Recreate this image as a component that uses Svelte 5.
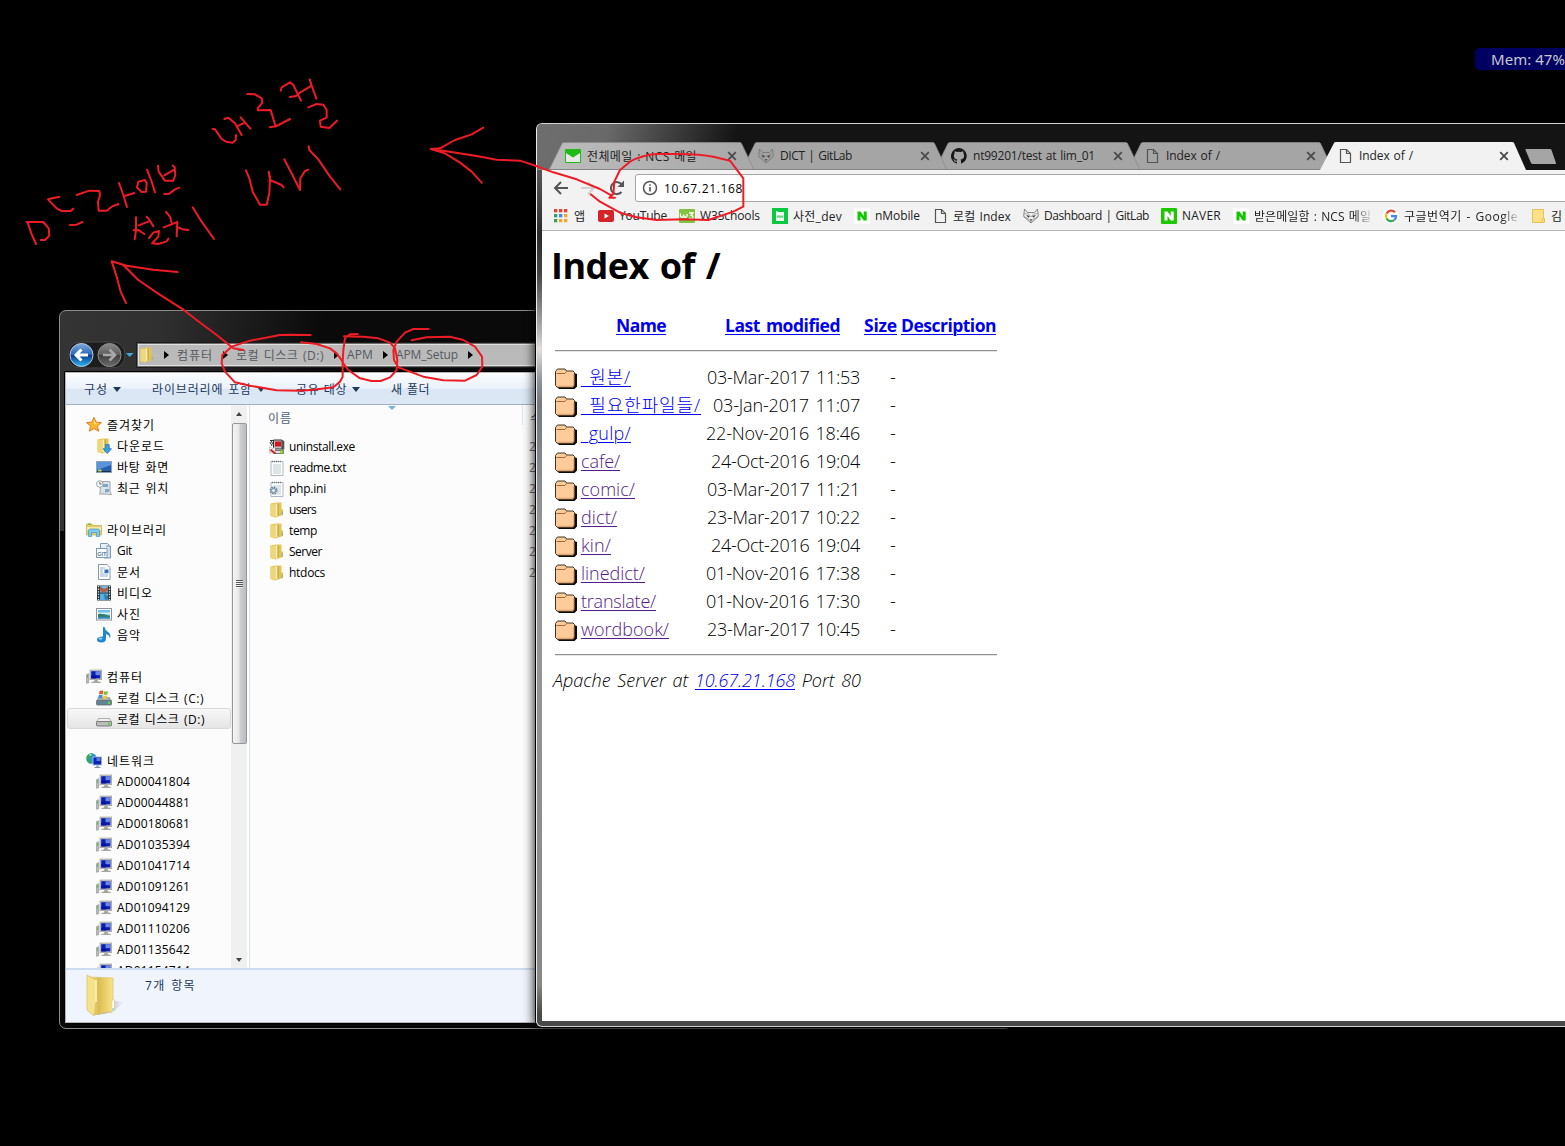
<script>
  // Spreads the letters of a label so that it takes exactly the given width.
  function fit(node, width) {
    const range = document.createRange();
    range.selectNodeContents(node);
    const natural = range.getBoundingClientRect().width;
    const count = [...node.textContent].length;
    node.style.letterSpacing = `${(width - natural) / count}px`;
    node.style.width = `${width}px`;
  }

  const isKorean = (s) => /[가-힣]/.test(s);

  const crumbs = [['컴퓨터', 36], ['로컬 디스크 (D:)', 88], ['APM', 26], ['APM_Setup', 62]];
  const commands = [['구성', 24, true], ['라이브러리에 포함', 100, true], ['공유 대상', 51, true], ['새 폴더', 39, false]];
  const pcs = ['AD00041804', 'AD00044881', 'AD00180681', 'AD01035394', 'AD01041714', 'AD01091261', 'AD01094129', 'AD01110206', 'AD01135642', 'AD01154714'];
  const groups = [
    { icon: 'star', name: '즐겨찾기', w: 48, items: [['download', '다운로드', 48], ['desktop', '바탕 화면', 52], ['recent', '최근 위치', 52]] },
    { icon: 'library', name: '라이브러리', w: 60, items: [['git', 'Git', 15], ['doc', '문서', 24], ['video', '비디오', 36], ['photo', '사진', 24], ['music', '음악', 24]] },
    { icon: 'pc', name: '컴퓨터', w: 36, items: [['diskc', '로컬 디스크 (C:)', 87], ['diskd', '로컬 디스크 (D:)', 88]] },
    { icon: 'network', name: '네트워크', w: 48, items: pcs.map((p) => ['pc', p, 73]) }
  ];
  const files = [['setup', 'uninstall.exe', 66], ['text', 'readme.txt', 57], ['ini', 'php.ini', 37], ['folder', 'users', 27], ['folder', 'temp', 28], ['folder', 'Server', 33], ['folder', 'htdocs', 36]];
  const tabs = [['mail', '전체메일 : NCS 메일', 110], ['gitlab', 'DICT | GitLab', 72], ['github', 'nt99201/test at lim_01', 122], ['page', 'Index of /', 54], ['page', 'Index of /', 54]];
  const bookmarks = [['youtube', 'YouTube', 48], ['w3', 'W3Schools', 60], ['dict', '사전_dev', 49], ['nwhite', 'nMobile', 45], ['page', '로컬 Index', 58], ['gitlab', 'Dashboard | GitLab', 105], ['ngreen', 'NAVER', 39], ['nwhite', '받은메일함 : NCS 메일', 117, true], ['google', '구글번역기 - Google', 114, true], ['bfolder', '김', 12]];
  const rows = [
    ['_원본/', 50, '03-Mar-2017 11:53', 153, false], ['_필요한파일들/', 120, '03-Jan-2017 11:07', 147, false],
    ['_gulp/', 50, '22-Nov-2016 18:46', 154, false], ['cafe/', 39, '24-Oct-2016 19:04', 149, true],
    ['comic/', 54, '03-Mar-2017 11:21', 153, true], ['dict/', 36, '23-Mar-2017 10:22', 153, true],
    ['kin/', 30, '24-Oct-2016 19:04', 149, true], ['linedict/', 64, '01-Nov-2016 17:38', 154, true],
    ['translate/', 75, '01-Nov-2016 17:30', 154, true], ['wordbook/', 88, '23-Mar-2017 10:45', 153, true]
  ];
</script>

{#snippet icon(name)}
  <svg class="ico" viewBox="0 0 16 16" width="16" height="16">
    {#if name === 'star'}
      <path d="M8 .3l2.200 4.800 5.200.5-3.900 3.500 1.200 5.200L8 11.600l-4.700 2.700 1.200-5.200L.6 5.600l5.200-.5z" fill="#fdb52b" stroke="#e0812c" />
      <path d="M8 2.500l1.400 3.500 3 .4L8 7.500z" fill="#ffe58a" />
    {:else if name === 'folder' || name === 'download'}
      <path d="M1.500 1.500L7 .5h5.500v13L6 15.500 1.500 14z" fill="#e2c557" />
      <path d="M1.500 1.500L6 2.500v13L1.500 14z" fill="#eed67a" />
      <path d="M6.500 1.500h2v12l-2 1z" fill="#fbf0b8" />
      <path d="M8.500 1.500h1.200v12H8.500z" fill="#c9a43a" />
      <path d="M12 7.500h2V13l-2 .5z" fill="#dcbf58" />
      {#if name === 'download'}
        <path d="M9.500 6.500h3.600v4.200h2.500L11.300 15.600 7 10.700h2.500z" fill="#35a3ea" stroke="#1d74bd" stroke-width=".7" />
      {:else}
        <path d="M12.800 10h.9v2.500h-.9z" fill="#5fb0dc" />
      {/if}
    {:else if name === 'desktop'}
      <rect x=".5" y="2.500" width="15" height="11" fill="#245fae" stroke="#8fa2bd" />
      <path d="M1 3h14v3L1 11z" fill="#5694dc" />
      <path d="M1 12h14v1H1z" fill="#1b2c4d" />
      <rect x="2" y="10.500" width="2" height="2" fill="#8ce05a" />
      <rect x="4" y="10.500" width="1.500" height="2" fill="#f7c948" />
    {:else if name === 'recent'}
      <path d="M5 1.500h9v10l1.500 3H5.500L4 12z" fill="#dfe3e6" stroke="#8d969d" stroke-width=".8" />
      <path d="M7 4h5v3H7zM9 9h4v3H9z" fill="#75aacb" />
      <circle cx="3.800" cy="4" r="3.300" fill="#f3f5f6" stroke="#8d969d" stroke-width=".8" />
      <path d="M3.800 2v2h1.700" fill="none" stroke="#555" stroke-width=".8" />
      <path d="M3 12.500h9v2.500H3z" fill="#c3c9cd" />
    {:else if name === 'library'}
      <path d="M.5 2h5.500l1 1.500h8.500V13H.5z" fill="#e7cd69" stroke="#cdaa3f" stroke-width=".7" />
      <path d="M1 5h14v3H1z" fill="#f7eaab" />
      <rect x="2" y="1.500" width="3" height="1.200" fill="#57c33e" />
      <path d="M2.500 14.500V9q0-2 2-2h7q2 0 2 2v5.500h-3V10.500h-5v4z" fill="#7ec9ee" stroke="#3c96cc" stroke-width=".7" />
    {:else if name === 'git'}
      <path d="M4.500.5h7L14 3v10H4.500z" fill="#e8f0f7" stroke="#7d9ab5" />
      <path d="M10 3h4.500v12H8" fill="#cfdfee" stroke="#7d9ab5" />
      <rect x=".5" y="5.500" width="10.500" height="9" fill="#fff" stroke="#7d9ab5" />
      <text x="1.200" y="12.600" class="gittext">GIT</text>
    {:else if name === 'doc'}
      <path d="M2.500.5h8.500l3 3v12H2.500z" fill="#fff" stroke="#8796a5" />
      <path d="M4 4h5M4 6h3M4 8h3M4 10h8M4 12h8" stroke="#8aa6d0" stroke-width=".9" />
      <rect x="8.500" y="5.500" width="4" height="3.500" fill="#2e6fb7" />
    {:else if name === 'video'}
      <path d="M1 .5h14v15H1z" fill="#29363b" />
      <path d="M4 1h8v6.500H4z" fill="#6ab7ea" /><path d="M4 8.500h8v6.500H4z" fill="#55aee6" />
      <path d="M4 1l4 3 4-2v4L8 7.500 4 6z" fill="#b4614a" /><path d="M8 9l4 2v3l-3 1z" fill="#3c78a4" />
      <path d="M2.500 1v14M13.500 1v14" stroke="#d8e4e8" stroke-width="1.300" stroke-dasharray="1.300 1.300" />
    {:else if name === 'photo'}
      <rect x=".5" y="2.500" width="15" height="11.500" fill="#fff" stroke="#8b949c" />
      <path d="M2 4h12v8.500H2z" fill="#6fc0ee" /><path d="M2 6.500h12v2H2z" fill="#d9f0f5" />
      <path d="M2 8q4-1 12 2v2.500H2z" fill="#2f7f6b" /><path d="M2 11h12v1.500H2z" fill="#3d8ed0" />
    {:else if name === 'music'}
      <path d="M8.500 0q.8 3.500 3.500 5 3.500 2.500 2 6.500-.3-3.500-4-4.500v4.500q0 4-4.500 4-4.500-.2-4.500-2.800 0-3 5.500-3.200h.5V0z" fill="#2088d2" />
      <ellipse cx="4.500" cy="11.700" rx="1.800" ry="1.100" fill="#8fcdf4" />
    {:else if name === 'pc'}
      <path d="M.5 5.500l2.200-.8v9l-2.200.6z" fill="#b9bcb9" stroke="#8b8f8b" stroke-width=".6" />
      <rect x="1" y="6.500" width="1" height="2" fill="#42b53a" />
      <rect x="4" y="1" width="11.700" height="9.700" fill="#c9c9c4" stroke="#96968f" stroke-width=".6" />
      <rect x="5.200" y="2.200" width="9.200" height="7.200" fill="#0a1fb5" />
      <path d="M9.500 2.200h4.900v4H9.500z" fill="#6a86e4" /><path d="M5.200 6.500h5v3h-5z" fill="#0612a0" />
      <path d="M8.500 11h3l1 1.700h2.300V14H5.500v-1.300h2.200z" fill="#a6a6a0" />
    {:else if name === 'diskc' || name === 'diskd'}
      <path d="M2.500 7.500h11l2 3.500H.5z" fill={name === 'diskc' ? '#9db0bb' : '#efefef'} stroke="#858585" stroke-width=".6" />
      <rect x=".5" y="10.500" width="15" height="4.500" rx="1" fill={name === 'diskc' ? '#5f8596' : '#bdbdbd'} stroke="#686868" stroke-width=".8" />
      <rect x="12" y="11.500" width="2" height="2.500" fill="#58dc3c" />
      {#if name === 'diskc'}
        <path d="M3.500 1q2-.9 3.800 0l-.6 3.400q-1.800-.8-3.700 0z" fill="#e8582a" /><path d="M8 1.300q2 .7 4-.2l-.7 3.500q-1.900.8-3.900 0z" fill="#7fc23a" />
        <path d="M2.800 5.200q2-.9 3.800 0L6 8.500q-1.800-.8-3.700 0z" fill="#3d8ee0" /><path d="M7.300 5.500q2 .7 4-.2l-.7 3.500q-1.900.8-3.900 0z" fill="#fcc52c" />
      {/if}
    {:else if name === 'network'}
      <circle cx="5.500" cy="5.500" r="5.300" fill="#2e8fe0" />
      <path d="M2 2q3-2.500 5-1.500L5 3.500 3.500 6.500l2 3-2 1Q0 7.500 1 3.500z" fill="#2fae3c" /><path d="M3 2q2-1.500 3-1l-2 2z" fill="#dff3ff" />
      <rect x="7" y="4" width="8.700" height="8" fill="#0c24b8" stroke="#a9c0dd" stroke-width=".9" />
      <path d="M10.500 5h4v3h-4z" fill="#5b79e2" /><path d="M10.500 12.500h2v1.500h2v1H8.500v-1h2z" fill="#7892a8" />
    {:else if name === 'setup'}
      <path d="M4.500 1h8.500v9H4.500z" fill="#c2c2c2" stroke="#333" /><path d="M6 2.500h6v5H6z" fill="#d4151b" />
      <path d="M13 1l2.300 1v8.500L13 11z" fill="#555" /><path d="M5 11.500h9.500v3H5z" fill="#ddd" stroke="#444" stroke-width=".7" />
      <path d="M1 1.500h3M2 1.500L4.500 6M1 3l2 4" stroke="#333" fill="none" />
      <path d="M0 8l4 1.500L6 7v7l-2-2-3 2.500z" fill="#fff" stroke="#777" stroke-width=".4" /><path d="M.5 11l2-1 4.500 4-.5 1H5z" fill="#d0242a" />
      <circle cx="13" cy="13" r="2" fill="#76b84a" /><path d="M11.500 12h1.500v1.500h-1.500z" fill="#eddb4c" />
    {:else if name === 'text' || name === 'ini'}
      <path d="M2 1.500h12v14H2z" fill="#fcfdfd" stroke="#9aa6ad" stroke-width=".8" />
      <path d="M3 1.500h10" stroke="#6b7980" stroke-width="1.500" stroke-dasharray="1 1" />
      <path d="M4 5h8M4 7h8M4 9h8M4 11h8M4 13h8" stroke="#b3bec5" stroke-width=".8" />
      {#if name === 'ini'}
        <circle cx="4.500" cy="9.500" r="3.200" fill="#b9cfdc" stroke="#5c7f96" stroke-width="1.600" stroke-dasharray="1.400 1.100" />
        <circle cx="4.500" cy="9.500" r="2" fill="#e6eff4" stroke="#6e90a5" />
      {/if}
    {:else if name === 'mail'}
      <rect y="1" width="16" height="14" rx="1" fill="#1fbb16" /><path d="M1 5l7 4.500L15 5v9H1z" fill="#e8e8e8" />
    {:else if name === 'gitlab'}
      <path d="M1.500 1l3 3.500h7l3-3.500.8 7.500L8 15 .7 8.500z" fill="none" stroke="#777" stroke-width=".9" />
      <path d="M1.500 5.500l4 .5 2.500 3 2.500-3 4-.5M1 8.500l5.500 3L8 14l1.500-2.500 5.500-3" fill="none" stroke="#888" stroke-width=".7" />
      <path d="M3 6.900l3.900 1.200-1.400 1.700zM13 6.900l-3.900 1.200 1.400 1.700zM6.800 11.300h2.400l-1.200 1.600z" fill="#3c3c3c" />
    {:else if name === 'github'}
      <path d="M8 0a8 8 0 0 0-2.500 15.600c.4.100.5-.2.500-.4v-1.500c-2.200.5-2.700-1-2.700-1-.4-.9-.9-1.200-.9-1.200-.7-.5.100-.5.100-.5.800.1 1.200.8 1.200.8.700 1.300 1.900.9 2.300.7.100-.5.300-.9.500-1.100-1.800-.2-3.600-.9-3.600-4 0-.9.300-1.600.8-2.100-.1-.2-.4-1 .1-2.100 0 0 .7-.2 2.200.8a7.500 7.500 0 0 1 4 0c1.500-1 2.200-.8 2.200-.8.400 1.100.2 1.900.1 2.100.5.600.8 1.300.8 2.100 0 3.100-1.900 3.800-3.700 4 .3.200.6.700.6 1.500v2.200c0 .2.100.5.500.4A8 8 0 0 0 8 0z" fill="#191717" />
    {:else if name === 'page'}
      <path d="M3.500 1.500h6l4 4v9h-10z" fill="none" stroke="#555" stroke-width="1.200" /><path d="M9.500 1.500v4h4" fill="none" stroke="#555" stroke-width="1.200" />
    {:else if name === 'youtube'}
      <rect y="2" width="16" height="12" rx="2" fill="#d42428" /><path d="M6.500 5.500v5L11 8z" fill="#fff" />
    {:else if name === 'w3'}
      <rect y="1" width="16" height="14" rx="1" fill="#83c341" />
      <path d="M1.500 5.500q-.2 4 1.500 4t1.700-3q0 3 1.700 3t1.800-3.500M10 5h4L12 7.500q3 .2 1.700 2.500-1.500 1.500-3.700 0" fill="none" stroke="#fff" stroke-width="1.300" />
    {:else if name === 'dict'}
      <rect width="16" height="16" fill="#0acb3f" /><path d="M4 4V3h1.500v1H12v9H4z" fill="#effff2" /><path d="M5 7.500h6.200v2.200H5z" fill="#66da83" />
    {:else if name === 'nwhite' || name === 'ngreen'}
      <rect width="16" height="16" rx="1" fill={name === 'ngreen' ? '#1ec800' : '#fff'} />
      <path d="M3.500 12.500v-9h3l3.200 4.500V3.500h3v9h-3L6.500 8v4.500z" fill={name === 'ngreen' ? '#fff' : '#13c700'} />
    {:else if name === 'google'}
      <circle cx="8" cy="8" r="8" fill="#fff" />
      <g fill="none" stroke-width="2.200"><path d="M12 4.300A5 5 0 0 0 3.600 5.700" stroke="#ea4335" /><path d="M3.600 5.700a5 5 0 0 0 0 4.700" stroke="#fbbc05" /><path d="M3.600 10.400a5 5 0 0 0 7.700 1.600" stroke="#34a853" /><path d="M11.300 12A5 5 0 0 0 13 8.200H8" stroke="#4285f4" /></g>
    {:else if name === 'bfolder'}
      <path d="M2.500 1.500h11v9h1v4h-12z" fill="#ffe08a" stroke="#ecc24f" />
      <path d="M13.500 1.500v9h-1v4" fill="none" stroke="#ecc24f" />
    {/if}
  </svg>
{/snippet}

{#snippet dirIcon()}
  <svg class="dir" viewBox="0 0 22 22" width="22" height="22">
    <path d="M3 5h16l3 1v12.500L19.500 21H4l-2-2z" fill="#0c0a08" />
    <path d="M.5 3.500L2.500 1H10l1.500 2H18l1.500 1.500v13l-1.500 2H2.500l-2-2z" fill="#ffcb98" stroke="#3c3226" stroke-width="1" />
    <path d="M1.500 5.500H10l1.500-2" fill="none" stroke="#a06a3c" />
    <path d="M2.500 18.500h15.500l1-1.500V6" fill="none" stroke="#bd8049" stroke-dasharray="1 1" stroke-width="1.500" />
  </svg>
{/snippet}

<main class="desktop">
  <div class="gadget"><span use:fit={74}>Mem: 47%</span></div>

  <section class="explorer">
    <header class="addressrow">
      <svg class="nav" viewBox="0 0 68 28" width="68" height="28">
        <defs>
          <linearGradient id="back" x1="0" y1="0" x2="0" y2="1"><stop offset="0" stop-color="#7ea9dd" /><stop offset=".48" stop-color="#2a67b4" /><stop offset=".52" stop-color="#0b3d8c" /><stop offset="1" stop-color="#2bb8f5" /></linearGradient>
          <linearGradient id="fwd" x1="0" y1="0" x2="0" y2="1"><stop offset="0" stop-color="#8a8a8a" /><stop offset=".5" stop-color="#5c5c5c" /><stop offset=".52" stop-color="#3f3f3f" /><stop offset="1" stop-color="#6c6c6c" /></linearGradient>
        </defs>
        <path d="M14 1h29q14 0 14 13T43 27H14Q0 27 0 14T14 1z" fill="#1d1d1d" stroke="#444" />
        <circle cx="13.500" cy="14" r="11.500" fill="url(#back)" stroke="#b4c8e0" />
        <circle cx="41.500" cy="14" r="11.500" fill="url(#fwd)" stroke="#8d8d8d" />
        <path d="M20 14H9M13.500 8.500L8 14l5.500 5.500" fill="none" stroke="#fff" stroke-width="3" />
        <path d="M35 14h11M41.500 8.500l5.500 5.500-5.500 5.500" fill="none" stroke="#a9a9a9" stroke-width="2.600" />
        <path d="M58 12h7.500l-3.750 4z" fill="#3fa9dd" />
      </svg>
      <div class="address">
        <span class="afolder">{@render icon('folder')}</span>
        {#each crumbs as [name, w]}
          <i class="right"></i><span class="t" class:ko={isKorean(name)} use:fit={w}>{name}</span>
        {/each}
        <i class="right"></i>
      </div>
    </header>
    <div class="client">
      <nav class="commands">
        {#each commands as [name, w, menu]}
          <div class="command"><span class="t ko" use:fit={w}>{name}</span>{#if menu}<i class="down"></i>{/if}</div>
        {/each}
      </nav>
      <div class="panes">
        <div class="tree">
          {#each groups as g}
            <div class="group">
              <div class="node">{@render icon(g.icon)}<span class="t ko" use:fit={g.w}>{g.name}</span></div>
              {#each g.items as [ic, name, w]}
                <div class="node leaf" class:picked={ic === 'diskd'}>{@render icon(ic)}<span class="t" class:ko={isKorean(name)} use:fit={w}>{name}</span></div>
              {/each}
            </div>
          {/each}
        </div>
        <div class="scroll">
          <i class="up"></i>
          <div class="thumb"><i></i><i></i><i></i><i></i></div>
          <i class="dn"></i>
        </div>
        <div class="list">
          <div class="cols"><span class="t" use:fit={24}>이름</span><i class="sort"></i><span class="col2">수정한 날짜</span></div>
          {#each files as [ic, name, w]}
            <div class="file">{@render icon(ic)}<span class="t" use:fit={w}>{name}</span><span class="date">2017</span></div>
          {/each}
        </div>
      </div>
      <footer class="details">
        <svg viewBox="0 0 40 44" width="40" height="44">
          <defs>
            <linearGradient id="fold" x1="0" y1="0" x2="1" y2="0"><stop offset="0" stop-color="#f7e9a0" /><stop offset=".4" stop-color="#dcbc52" /><stop offset="1" stop-color="#f8e587" /></linearGradient>
            <linearGradient id="shade" x1="0" y1="0" x2="1" y2="0"><stop offset=".3" stop-color="#6d7688" stop-opacity=".6" /><stop offset="1" stop-color="#8d96a8" stop-opacity="0" /></linearGradient>
          </defs>
          <path d="M24 26l15 2-11 10-16 3z" fill="url(#shade)" />
          <path d="M4 3l24 1v33l-19 4z" fill="url(#fold)" stroke="#d9bd5e" stroke-width=".6" />
          <path d="M2 1l9 5v22l-2 14-7-6z" fill="#f5e28a" stroke="#d4b653" stroke-width=".6" />
          <path d="M11 6v22" stroke="#fff6cc" stroke-width="1.500" /><path d="M27 26h2.500v11l-3 2z" fill="#fff" stroke="#e3cb6d" stroke-width=".6" />
          <path d="M28 34v3" stroke="#5fb0e8" />
        </svg>
        <span class="t ko" use:fit={51}>7개 항목</span>
      </footer>
    </div>
  </section>

  <section class="chrome">
    <header class="strip">
      <svg class="shapes" viewBox="0 0 1028 46" width="1028" height="46">
        {#each [3, 2, 1, 0] as i}
          <g transform={`translate(${12 + 193 * i} 18)`}>
            <path d="M0 28L13 1.500Q13.500 .5 15 .5H190.500Q192 .5 192.500 1.500L205 28z" fill={i === 0 ? 'url(#tab0)' : '#a5a5a5'} stroke="#8a8a8a" stroke-width=".8" />
          </g>
        {/each}
        <defs><linearGradient id="tab0"><stop offset="0" stop-color="#bcbcbc" /><stop offset="1" stop-color="#a8a8a8" /></linearGradient></defs>
        <path d="M0 45.500h785" stroke="#858585" />
        <path d="M783 46L797 19q.5-1 2-1h176q1.500 0 2 1l12 27z" fill="#f2f2f2" />
        <path d="M989 25h24q1 0 1.500 1l4.500 13q.5 1-1 1h-22q-1.500 0-2-1l-5.500-13q-.5-1 .5-1z" fill="#a5a5a5" />
      </svg>
      <div class="tabs">
        {#each tabs as [ic, name, w]}
          <div class="tab">
            {@render icon(ic)}<span class="t" class:ko={isKorean(name)} use:fit={w}>{name}</span>
            <svg class="close" viewBox="0 0 10 10" width="10" height="10"><path d="M1.200 1.200l7.600 7.600M8.800 1.200L1.200 8.800" stroke="#4b4b4b" stroke-width="1.800" /></svg>
          </div>
        {/each}
      </div>
    </header>
    <div class="page">
      <div class="toolbar">
        <svg viewBox="0 0 92 30" width="92" height="30">
          <path d="M26 15H13.500M19 9l-6 6 6 6" fill="none" stroke="#555" stroke-width="2" />
          <path d="M39 15h12M46 9l6 6-6 6" fill="none" stroke="#d2d2d2" stroke-width="2" />
          <path d="M79.500 19a6 6 0 1 1 .2-7.500" fill="none" stroke="#555" stroke-width="2" /><path d="M82 7.500v6.500h-6.500z" fill="#555" />
        </svg>
        <div class="omnibox">
          <svg viewBox="0 0 16 16" width="16" height="16"><circle cx="8" cy="8" r="6.500" fill="none" stroke="#555" stroke-width="1.500" /><path d="M8 7v4.500M8 4.300v1.500" stroke="#555" stroke-width="1.600" /></svg>
          <span class="t" use:fit={79}>10.67.21.168</span>
        </div>
      </div>
      <div class="marks">
        <div class="mark apps">
          <svg viewBox="0 0 14 14" width="14" height="14">
            {#each ['#ea4335', '#ea4335', '#ea4335', '#34a05c', '#4285f4', '#f5a623', '#34a05c', '#f5a623', '#f5a623'] as c, i}
              <rect x={(i % 3) * 5} y={Math.floor(i / 3) * 5} width="3.300" height="3.300" fill={c} />
            {/each}
          </svg>
          <span class="t ko" use:fit={12}>앱</span>
        </div>
        {#each bookmarks as [ic, name, w, fade]}
          <div class="mark">{@render icon(ic)}<span class="t" class:ko={isKorean(name)} class:fade use:fit={w}>{name}</span></div>
        {/each}
      </div>
      <article class="index">
        <h1><span class="t" use:fit={169}>Index of /</span></h1>
        <div class="grid head">
          <span></span><a href="#name"><span class="t" use:fit={50}>Name</span></a><a href="#date"><span class="t" use:fit={115}>Last modified</span></a>
          <a href="#size"><span class="t" use:fit={33}>Size</span></a><a href="#desc"><span class="t" use:fit={95}>Description</span></a>
        </div>
        <hr />
        <div class="rows">
          {#each rows as [name, w, date, dw, seen]}
            <div class="grid">
              {@render dirIcon()}<a href="#dir" class:seen><span class="t" use:fit={w}>{name}</span></a>
              <span class="when"><span class="t" use:fit={dw}>{date}</span></span><span class="size">-</span>
            </div>
          {/each}
        </div>
        <hr />
        <address><span class="t" use:fit={142}>Apache Server at&nbsp;</span><a href="#host"><span class="t" use:fit={100}>10.67.21.168</span></a><span class="t" use:fit={66}>&nbsp;Port 80</span></address>
      </article>
    </div>
  </section>

  <svg class="ink" viewBox="0 0 1565 1146" width="1565" height="1146">
    <g transform="translate(10 70) scale(.33333)">
      <path d="M50 456H100L116 475 118 497 105 510H92M53 458L64 490 78 522M148 380L114 388 140 415 155 423H182L190 416M180 465L200 464 217 456M200 375L238 362 268 363 270 375 264 395 266 422H290L305 410 325 402M327 339L340 375 351 411M344 378L373 369M385 335L405 330 410 340 408 365 395 366 381 352ZM411 299L425 335 435 367M444 287L446 305 465 332H490L496 315 494 291 488 287M463 316L494 298M463 372L478 371 495 358 508 353" />
      <path d="M378 442V480L374 508M371 481L385 480 403 492M386 466L415 455M410 440L420 452 430 469M417 504L430 488 447 483 445 500 426 520 445 522 470 514 475 506M468 426L480 440 485 458M461 472L500 457M502 455L500 499M500 470L518 478 535 480M548 412L575 455 612 507" />
      <path d="M503 606L430 599 350 587 305 574 320 620 332 665 348 699M307 574L340 585 385 630 440 668 520 719" />
      <path d="M608 177L615 178 635 207 648 215 668 218 677 210 678 195M643 147L655 143 675 160 695 195M680 170L705 157M692 142L705 157 721 176M712 72L735 73 755 85 757 98 743 115 744 121 782 120 797 170M780 172L800 168 840 147M812 62L815 52 840 37 850 45 873 92M840 81L858 78 870 68 905 47M899 28L906 50 919 86M895 112L920 102 940 104 950 120V143L930 152 932 170 958 174 981 152" />
      <path d="M708 301L718 325 728 365 750 404H770L778 370 780 320 776 305 780 330 815 345 821 352M823 268L850 320 870 360 871 325 885 303 895 299M896 229L898 240 925 268 960 320 991 358" />
    </g>
    <g transform="translate(50 300) scale(.33333)">
      <path d="M400 29L440 60 500 105 550 145 580 150M782 105L720 104 690 105 600 122 545 140 517 165 515 190 525 215 555 247 600 257 680 271 750 272 790 269 850 262 870 245 878 230V185L860 160 840 145 800 132 753 127" />
    </g>
    <g transform="translate(290 300) scale(.33333)">
      <path d="M203 102L180 103 165 115 160 150 158 188 175 210 210 235 245 243H272L300 232 320 210 322 180 315 145 300 128 265 115 220 110 162 109M416 87H370L345 98 320 125 310 150 312 180 325 202 360 215 400 230 460 241 525 242 560 225 577 200 576 170 555 140 520 120 480 110 410 112 365 121" />
    </g>
    <g transform="translate(400 110) scale(.33333)">
      <path d="M250 53L215 73 165 90 120 115 92 117 135 130 180 158 215 185 245 218M92 117L130 122 230 138 290 149 360 152 400 165 460 187 530 208 600 237 635 257M645 263H628L640 252 643 215 660 180 690 155 Q725 135 770 132L840 132 Q900 133 940 140 L990 152 1030 205V290L1000 305 925 330 850 328 770 330 710 322 660 308 600 275 572 253" />
    </g>
  </svg>
</main>

<style>
  :global(body) { background: #000; overflow: hidden; }
  .desktop {
    position: relative; width: 1565px; height: 1146px; overflow: hidden; background: #000;
    font-family: "Open Sans", "Noto Sans CJK KR", sans-serif; font-size: 12px; line-height: 20px; color: #000;
  }
  .desktop * { box-sizing: border-box; }
  .t { display: inline-block; white-space: nowrap; word-spacing: 1px; }
  .ko { padding-top: 2px; }
  .ico, .dir { flex: none; display: block; }
  .gittext { font: bold 5.500px "Liberation Sans", sans-serif; fill: #55789b; }
  .gadget {
    position: absolute; left: 1475px; top: 48px; width: 100px; height: 22px; padding-left: 16px;
    border-radius: 5px; background: #000062; color: #c8c8d0; font: 15px/23px "Noto Sans", sans-serif; white-space: nowrap;
  }
  .gadget span { display: inline-block; }

  .explorer {
    position: absolute; left: 59px; top: 310px; width: 953px; height: 719px; padding: 0 5px 5px;
    display: flex; flex-direction: column; border: 1px solid #8c8c8c; border-radius: 7px;
    background: linear-gradient(100deg, #343434 0, #303030 100px, #0a0a0a 260px, #090909 100%);
    background-size: 100% 220px; background-color: #080808; background-repeat: no-repeat;
  }
  .addressrow { display: flex; height: 61px; padding: 30px 0 0 3px; }
  .nav { flex: none; }
  .address {
    display: flex; align-items: center; width: 420px; height: 24px; margin: 2px 0 0 1px; padding-left: 1px;
    border: 1px solid #6b6b6b; outline: 1px solid #1c1c1c; box-shadow: inset 0 0 0 1px #e0e0e0; background: #bababa; color: #55595f;
  }
  .afolder { margin-right: 7px; }
  .right { flex: none; width: 0; height: 0; margin: 0 8px 0 2px; border: 4px solid transparent; border-left: 5px solid #000; border-right: 0; }
  .address .t + .right { margin-left: 10px; }
  .client {
    flex: 1; min-height: 0; display: flex; flex-direction: column; border: 1px solid #b5b5b5; outline: 1px solid #000; background: #fcfcfc;
  }
  .commands {
    display: flex; align-items: center; gap: 31px; flex: none; height: 32px; padding-left: 18px; border-top: 1px solid #fff; border-bottom: 1px solid #a0afc3;
    background: linear-gradient(#fafcff 0, #ebf2fb 46%, #dbe6f4 52%, #dde8f5 100%); color: #1e395b;
  }
  .command { display: flex; align-items: center; }
  .down { width: 0; height: 0; margin-left: 5px; border: 4px solid transparent; border-top: 5px solid #1e395b; border-bottom: 0; }
  .panes { flex: 1; min-height: 0; display: flex; }
  .tree { width: 165px; padding: 9px 0 0 1px; overflow: hidden; }
  .group { margin-bottom: 21px; }
  .node { display: flex; align-items: center; gap: 5px; height: 21px; padding-left: 19px; border: 0 solid #d9d9d9; border-radius: 3px; }
  .leaf { padding-left: 29px; }
  .picked { border-width: 1px; padding-left: 28px; background: linear-gradient(#f8f8f8, #e5e5e5); }
  .scroll { display: flex; flex-direction: column; align-items: flex-start; width: 18px; padding-left: 1px; border-right: 2px solid #fff; background: #f0f0f0; }
  .up, .dn { width: 0; height: 0; margin: 7px 0 0 4px; border: 3.500px solid transparent; border-bottom: 4px solid #444; border-top: 0; }
  .dn { margin: auto 0 6px 4px; border-bottom: 0; border-top: 4px solid #444; }
  .thumb {
    display: flex; flex-direction: column; align-items: center; justify-content: center; gap: 1px; width: 15px; height: 321px; margin-top: 7px;
    border: 1px solid #979797; border-radius: 2px; background: linear-gradient(90deg, #f4f4f4, #e8e8e8 45%, #cfcfd1 55%, #bcbcc0);
  }
  .thumb i { width: 7px; height: 1px; background: #555; box-shadow: 0 1px #fff8; }
  .list { width: 400px; border-left: 1px solid #d9e5f3; }
  .cols { display: flex; align-items: flex-start; height: 31px; padding: 4px 0 0 18px; color: #4c607a; }
  .sort { width: 0; height: 0; margin: -3px 0 0 96px; border: 4px solid transparent; border-top: 4px solid #77b2d3; border-bottom: 0; }
  .col2 { height: 20px; margin: -4px 0 0 126px; padding: 4px 0 0 7px; border-left: 1px solid #d9e8f6; white-space: nowrap; }
  .file { display: flex; align-items: center; gap: 4px; height: 21px; padding-left: 19px; }
  .file .t { flex: none; }
  .date { position: absolute; left: 469px; color: #6d6d6d; }
  .details { display: flex; flex: none; height: 54px; padding: 4px 0 0 19px; gap: 20px; border-top: 2px solid #cddcee; background: #f0f4fc; color: #1e395b; }

  .chrome {
    position: absolute; left: 536px; top: 123px; width: 1050px; height: 904px; padding: 0 0 5px 5px; display: flex; flex-direction: column;
    border: 1px solid #d4d4d4; border-left-color: #ececec; border-radius: 6px;
    background: linear-gradient(#5a5a5a 0, #555 50px, #2b2b2b 110px, #444 150px, #b9b9b9 210px, #e4dede 225px, #888f97 260px, #747a80 280px, #9a9a9a 420px, #888 860px, #484848 890px);
    box-shadow: 0 0 0 1px #000, -1px 2px 12px 0 #000;
  }
  .strip {
    position: relative; flex: none; height: 46px; margin-left: -5px; padding: 18px 0 0 12px; border-radius: 5px 0 0;
    background: linear-gradient(105deg, #6e6e6e 0, #696969 70px, #141414 195px);
  }
  .shapes { position: absolute; left: 0; top: 0; }
  .tabs { position: relative; display: flex; }
  .tab { display: flex; align-items: center; flex: none; width: 193px; height: 28px; padding: 0 5px 0 16px; gap: 6px; color: #222; }
  .close { margin-left: auto; }
  .page { flex: 1; min-height: 0; background: #fff; overflow: hidden; }
  .toolbar { display: flex; height: 33px; padding-top: 4px; background: #f2f2f2; }
  .toolbar > svg { flex: none; margin-top: -1px; }
  .omnibox { flex: 1; display: flex; align-items: center; gap: 6px; height: 28px; padding-left: 6px; border: 1px solid #a6a6a6; border-radius: 3px 0 0 3px; background: #fff; margin-left: 1px; }
  .omnibox .t { padding-top: 1px; }
  .marks { display: flex; align-items: center; gap: 12px; height: 28px; padding: 0 0 2px 12px; background: #f2f2f2; border-bottom: 1px solid #b3b3b3; color: #222; }
  .mark { display: flex; align-items: center; gap: 5px; flex: none; }
  .apps { gap: 6px; }
  .fade { -webkit-mask-image: linear-gradient(90deg, #000 86%, #0002); mask-image: linear-gradient(90deg, #000 86%, #0002); }

  .index { padding: 0 0 0 10px; font-size: 18px; line-height: 28px; font-weight: 300; }
  .index .t { word-spacing: 2px; }
  h1 { margin: 0 0 0 -1px; height: 80px; padding-top: 10px; font-size: 36px; line-height: 50px; font-weight: 700; }
  h1 .t { word-spacing: 5px; }
  .grid { display: grid; grid-template-columns: 22px 126px 157px 37px 96px; height: 28px; padding-left: 3px; }
  .grid > a { padding-left: 4px; }
  .grid a, address a { color: #0000ee; text-decoration: none; }
  .grid a .t, address a .t { text-decoration: underline; text-decoration-thickness: 1px; text-underline-offset: 2px; }
  .grid a.seen { color: #551a8b; }
  .head { font-size: 17.500px; font-weight: 700; }
  .head > a { text-align: center; padding: 0 0 0 2px; }
  .head > a:nth-child(4), .head > a:nth-child(5) { text-align: left; padding-left: 4px; }
  .head .t { text-decoration-thickness: 2px; }
  .dir { margin-top: 5px; }
  .when { text-align: right; }
  .size { padding-left: 30px; }
  hr { width: 442px; height: 2px; margin: 11px 0 11px 3px; border: 0; border-top: 1px solid #8f8f8f; border-bottom: 1px solid #e6e6e6; }
  .rows + hr { margin: 11px 0 10px 3px; }
  address { font-style: italic; white-space: nowrap; padding-left: 1px; }

  .ink { position: absolute; left: 0; top: 0; pointer-events: none; }
  .ink path { fill: none; stroke: #ed1c24; stroke-width: 6; stroke-linejoin: round; stroke-linecap: round; }
</style>
